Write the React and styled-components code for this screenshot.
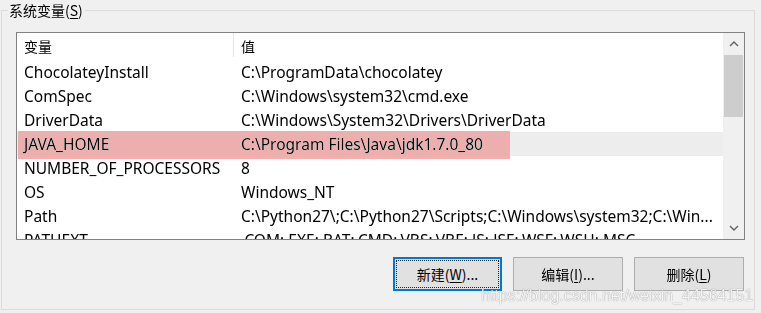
import React from 'react';
import styled, { createGlobalStyle } from 'styled-components';

const GlobalStyle = createGlobalStyle`
  html, body {
    margin: 0;
    padding: 0;
    background: #f0f0f0;
  }
  body {
    font-family: "Noto Sans", "Noto Sans CJK SC", sans-serif;
    color: #000;
  }
`;

const Page = styled.div`
  width: 761px;
  height: 313px;
  overflow: hidden;
  position: relative;
  background: #f0f0f0;
`;

const GroupBox = styled.div`
  position: relative;
  box-sizing: border-box;
  margin: 10px 0 0 1px;
  width: 754px;
  height: 300px;
  border: 1px solid #dcdcdc;
  padding: 21px 0 0 14px;
`;

const Legend = styled.div`
  position: absolute;
  top: -9px;
  left: 6px;
  padding: 0 2px 0 1px;
  background: #f0f0f0;
  font-family: "Noto Sans CJK SC", sans-serif;
  font-size: 14px;
  line-height: 16px;

  u {
    text-decoration: underline;
    text-underline-offset: 2px;
  }
`;

const ListBox = styled.div`
  box-sizing: border-box;
  width: 729px;
  height: 208px;
  border: 1px solid #828282;
  background: #fff;
  display: grid;
  grid-template-columns: 1fr 21px;
  overflow: hidden;
  position: relative;
`;

const Table = styled.div`
  display: flex;
  flex-direction: column;
  overflow: hidden;
`;

const Row = styled.div`
  display: grid;
  grid-template-columns: 217px 1fr;
  flex: none;
  height: ${(p) => p.$h || 24}px;
  align-items: center;
  background: ${(p) => (p.$selected ? '#ededed' : 'transparent')};
  font-size: 15.5px;
  white-space: nowrap;
`;

const Cell = styled.div`
  padding-left: 7px;
  overflow: hidden;
  align-self: stretch;
  display: flex;
  align-items: center;
`;

const HeadCell = styled(Cell)`
  font-family: "Noto Sans CJK SC", sans-serif;
  font-size: 14px;
  padding-top: 2px;
  border-right: ${(p) => (p.$first ? '1px solid #e5e5e5' : 'none')};
  margin-bottom: 3px;
`;

const Scrollbar = styled.div`
  background: #f0f0f0;
  display: flex;
  flex-direction: column;
  align-items: stretch;
`;

const ArrowBox = styled.div`
  height: 22px;
  display: flex;
  align-items: center;
  justify-content: center;
  flex: none;
`;

const Track = styled.div`
  flex: 1;
  padding: 0 1px;
`;

const Thumb = styled.div`
  height: 62px;
  background: #cdcdcd;
`;

const Marker = styled.div`
  position: absolute;
  left: 1px;
  top: 98px;
  width: 492px;
  height: 28px;
  background: #f2afad;
  mix-blend-mode: darken;
  pointer-events: none;
`;

const ButtonRow = styled.div`
  width: 728px;
  display: flex;
  justify-content: flex-end;
  gap: 11px;
  margin-top: 17px;
`;

const Button = styled.button`
  box-sizing: border-box;
  width: ${(p) => p.$w || 110}px;
  height: 34px;
  background: #e1e1e1;
  border: ${(p) => (p.$focused ? '2px solid #0078d7' : '1px solid #adadad')};
  font-family: "Noto Sans CJK SC", sans-serif;
  font-size: 14px;
  color: #000;
  padding: 0;
  position: relative;

  u {
    text-decoration: underline;
    text-underline-offset: 2px;
  }
`;

const FocusRing = styled.span`
  position: absolute;
  inset: 1px;
  border: 1px dotted #222;
  pointer-events: none;
`;

const Watermark = styled.div`
  position: absolute;
  left: 481px;
  top: 287px;
  font-family: "Liberation Sans", Arial, sans-serif;
  font-size: 16px;
  color: rgba(255, 255, 255, 0.9);
  text-shadow: 0 0 1px rgba(0, 0, 0, 0.4), 0 0 1px rgba(0, 0, 0, 0.2);
  white-space: nowrap;
  pointer-events: none;
`;

const rows = [
  ['ChocolateyInstall', 'C:\\ProgramData\\chocolatey'],
  ['ComSpec', 'C:\\Windows\\system32\\cmd.exe'],
  ['DriverData', 'C:\\Windows\\System32\\Drivers\\DriverData'],
  ['JAVA_HOME', 'C:\\Program Files\\Java\\jdk1.7.0_80'],
  ['NUMBER_OF_PROCESSORS', '8'],
  ['OS', 'Windows_NT'],
  ['Path', 'C:\\Python27\\;C:\\Python27\\Scripts;C:\\Windows\\system32;C:\\Win...'],
  ['PATHEXT', '.COM;.EXE;.BAT;.CMD;.VBS;.VBE;.JS;.JSE;.WSF;.WSH;.MSC'],
];

const Chevron = ({ down }) => (
  <svg width="10" height="6" viewBox="0 0 10 6">
    <path
      d={down ? 'M1 1 L5 5 L9 1' : 'M1 5 L5 1 L9 5'}
      fill="none"
      stroke="#606060"
      strokeWidth="1.4"
    />
  </svg>
);

const App = () => {
  return (
    <Page>
      <GlobalStyle />
      <GroupBox>
        <Legend>
          系统变量(<u>S</u>)
        </Legend>
        <ListBox>
          <Table>
            <Row $h={27}>
              <HeadCell $first>变量</HeadCell>
              <HeadCell>值</HeadCell>
            </Row>
            {rows.map(([name, value]) => (
              <Row key={name} $selected={name === 'JAVA_HOME'}>
                <Cell>{name}</Cell>
                <Cell>{value}</Cell>
              </Row>
            ))}
          </Table>
          <Scrollbar>
            <ArrowBox>
              <Chevron />
            </ArrowBox>
            <Track>
              <Thumb />
            </Track>
            <ArrowBox>
              <Chevron down />
            </ArrowBox>
          </Scrollbar>
          <Marker />
        </ListBox>
        <ButtonRow>
          <Button $focused $w={109}>
            新建(<u>W</u>)...
            <FocusRing />
          </Button>
          <Button>
            编辑(<u>I</u>)...
          </Button>
          <Button>
            删除(<u>L</u>)
          </Button>
        </ButtonRow>
      </GroupBox>
      <Watermark>https://blog.csdn.net/weixin_44564151</Watermark>
    </Page>
  );
};

export default App;
